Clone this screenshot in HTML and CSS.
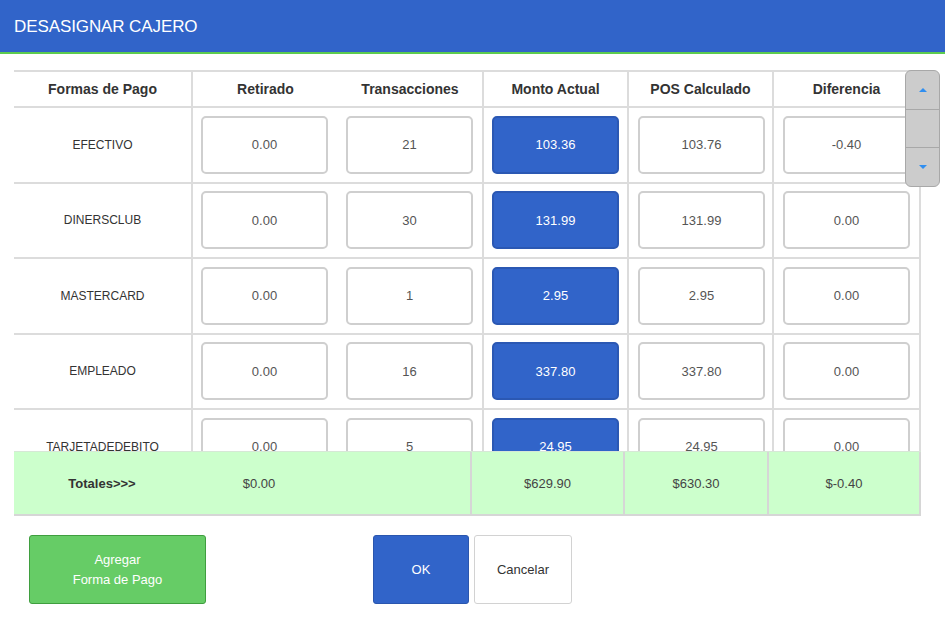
FILE: index.html
```html
<!DOCTYPE html>
<html lang="es">
<head>
<meta charset="utf-8">
<title>Desasignar Cajero</title>
<link rel="stylesheet" href="styles.css">
</head>
<body>
<div class="titlebar">DESASIGNAR CAJERO</div>
<div class="content">
  <div class="grid-wrap">
    <div class="viewport">
      <div class="row head">
        <div class="c c1">Formas de Pago</div>
        <div class="c c2">Retirado</div>
        <div class="c c3">Transacciones</div>
        <div class="c c4">Monto Actual</div>
        <div class="c c5">POS Calculado</div>
        <div class="c c6">Diferencia</div>
      </div>
      <div class="row">
        <div class="c c1 label">EFECTIVO</div>
        <div class="c c2"><div class="box">0.00</div></div>
        <div class="c c3"><div class="box">21</div></div>
        <div class="c c4"><div class="box blue">103.36</div></div>
        <div class="c c5"><div class="box">103.76</div></div>
        <div class="c c6"><div class="box">-0.40</div></div>
      </div>
      <div class="row">
        <div class="c c1 label">DINERSCLUB</div>
        <div class="c c2"><div class="box">0.00</div></div>
        <div class="c c3"><div class="box">30</div></div>
        <div class="c c4"><div class="box blue">131.99</div></div>
        <div class="c c5"><div class="box">131.99</div></div>
        <div class="c c6"><div class="box">0.00</div></div>
      </div>
      <div class="row">
        <div class="c c1 label">MASTERCARD</div>
        <div class="c c2"><div class="box">0.00</div></div>
        <div class="c c3"><div class="box">1</div></div>
        <div class="c c4"><div class="box blue">2.95</div></div>
        <div class="c c5"><div class="box">2.95</div></div>
        <div class="c c6"><div class="box">0.00</div></div>
      </div>
      <div class="row">
        <div class="c c1 label">EMPLEADO</div>
        <div class="c c2"><div class="box">0.00</div></div>
        <div class="c c3"><div class="box">16</div></div>
        <div class="c c4"><div class="box blue">337.80</div></div>
        <div class="c c5"><div class="box">337.80</div></div>
        <div class="c c6"><div class="box">0.00</div></div>
      </div>
      <div class="row">
        <div class="c c1 label">TARJETADEDEBITO</div>
        <div class="c c2"><div class="box">0.00</div></div>
        <div class="c c3"><div class="box">5</div></div>
        <div class="c c4"><div class="box blue">24.95</div></div>
        <div class="c c5"><div class="box">24.95</div></div>
        <div class="c c6"><div class="box">0.00</div></div>
      </div>
    </div>
    <div class="totals">
      <div class="t t1">Totales&gt;&gt;&gt;</div>
      <div class="t t2">$0.00</div>
      <div class="t t3"></div>
      <div class="t t4">$629.90</div>
      <div class="t t5">$630.30</div>
      <div class="t t6">$-0.40</div>
    </div>
    <div class="scroller">
      <div class="sc-btn"><span class="arrow up"></span></div>
      <div class="sc-mid"></div>
      <div class="sc-btn"><span class="arrow down"></span></div>
    </div>
  </div>
  <div class="actions">
    <button class="btn btn-green">Agregar<br>Forma de Pago</button>
    <div class="pair">
      <button class="btn btn-ok">OK</button>
      <button class="btn btn-cancel">Cancelar</button>
    </div>
  </div>
</div>
</body>
</html>
```

FILE: styles.css
```css
* { box-sizing: border-box; }
html, body { margin: 0; padding: 0; background: #fff; }
body {
  font-family: "Liberation Sans", Arial, sans-serif;
  color: #333;
  width: 945px;
  height: 635px;
  overflow: hidden;
}
.titlebar {
  height: 54px;
  background: #3164c9;
  border-bottom: 2px solid #5ccb4e;
  color: #fff;
  font-size: 17px;
  padding: 17px 0 0 14px;
  letter-spacing: -0.1px;
}
.content { padding: 16px 0 0 14px; }
.grid-wrap { position: relative; width: 907px; }
.viewport { height: 381px; overflow: hidden; }
.row {
  display: grid;
  grid-template-columns: 179px 145px 146px 145px 145px 147px;
  height: 75.5px;
  border-bottom: 2px solid #dcdcdc;
}
.row.head {
  height: 38px;
  border-top: 2px solid #dcdcdc;
  font-weight: bold;
  font-size: 14px;
  color: #333;
}
.c {
  display: flex;
  align-items: center;
  justify-content: center;
}
.row:not(.head) .c2, .row:not(.head) .c3, .row:not(.head) .c4,
.row:not(.head) .c5, .row:not(.head) .c6 {
  justify-content: flex-start;
  padding-left: 8px;
}
.row:not(.head) .c5, .row:not(.head) .c6 { padding-left: 9px; }
.c1, .c3, .c4, .c5, .c6 { border-right: 2px solid #dcdcdc; }
.label { font-size: 12px; color: #333; }
.box {
  width: 127px;
  height: 58px;
  border: 2px solid #cfcfcf;
  border-radius: 5px;
  display: flex;
  align-items: center;
  justify-content: center;
  font-size: 13px;
  color: #555;
  background: #fff;
}
.box.blue {
  background: #3164c9;
  border-color: #2b58b3;
  color: #fff;
}
.totals {
  display: grid;
  grid-template-columns: 176px 138px 144px 153px 144px 152px;
  height: 65px;
  background: #ccffcc;
  border-bottom: 2px solid #d6d6d6;
  border-top: 1px solid #d6e8d6;
}
.t {
  display: flex;
  align-items: center;
  justify-content: center;
  font-size: 13px;
  color: #444;
}
.t1 { font-weight: bold; color: #333; }
.t3, .t4, .t5 { border-right: 2px solid #d6d6d6; }
.t6 { border-right: 2px solid #d6d6d6; }
.scroller {
  position: absolute;
  top: 0;
  left: 891px;
  width: 35px;
  height: 117px;
  background: #cccccc;
  border: 1.5px solid #a8a8a8;
  border-radius: 6px;
  display: flex;
  flex-direction: column;
}
.sc-btn {
  height: 38px;
  display: flex;
  align-items: center;
  justify-content: center;
}
.sc-mid {
  flex: 1;
  border-top: 1.5px solid #a8a8a8;
  border-bottom: 1.5px solid #a8a8a8;
}
.arrow {
  width: 0; height: 0;
  border-left: 4px solid transparent;
  border-right: 4px solid transparent;
}
.arrow.up { border-bottom: 4px solid #2f8ef0; }
.arrow.down { border-top: 4px solid #2f8ef0; }
.actions {
  display: flex;
  align-items: flex-start;
  padding: 19px 0 0 15px;
}
.btn {
  font-family: "Liberation Sans", Arial, sans-serif;
  font-size: 13px;
  height: 69px;
  border-radius: 3px;
  cursor: pointer;
  line-height: 20px;
  padding: 0;
}
.btn-green {
  width: 177px;
  background: #66cc66;
  border: 1.5px solid #3f9e3f;
  color: #fff;
}
.pair { display: flex; gap: 5px; margin-left: 167px; }
.btn-ok {
  width: 96px;
  background: #3164c9;
  border: 1.5px solid #2a56ae;
  color: #fff;
}
.btn-cancel {
  width: 98px;
  background: #fff;
  border: 1.5px solid #d2d2d2;
  color: #333;
}
```
